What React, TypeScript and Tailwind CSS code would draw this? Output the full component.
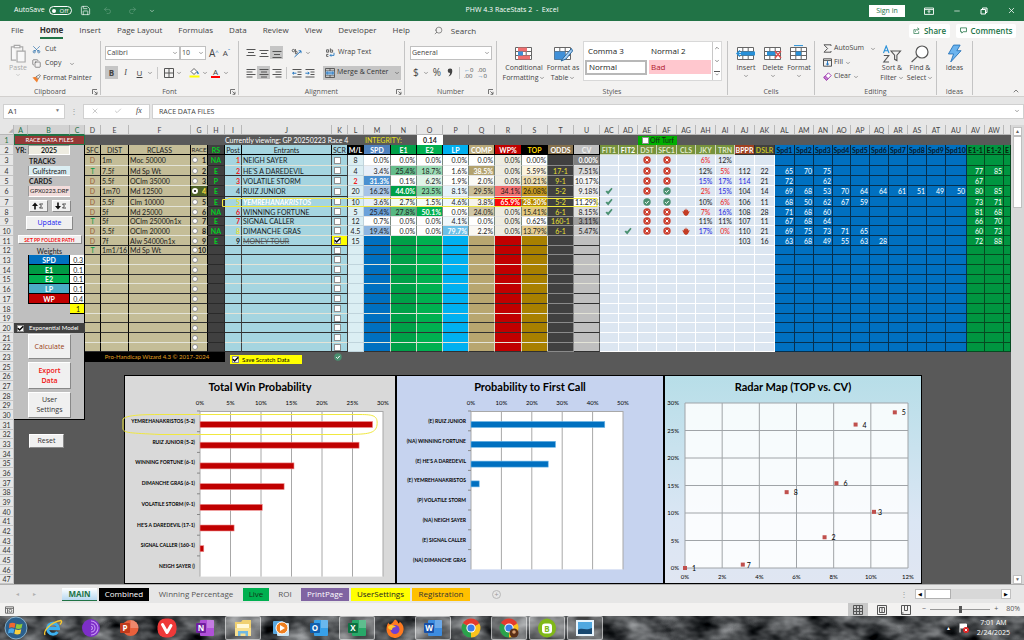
import { ReactNode } from "react";
import clsx from "clsx";
import {
  Check,
  ChevronDown,
  ChevronUp,
  Copy,
  Minus,
  Redo2,
  Save,
  Scissors,
  Search,
  Undo2,
  X,
} from "lucide-react";

type Cell = [text: string, className: string];

type Horse = {
  post: string;
  postClass: string;
  name: string;
  ml: string;
  stats: Cell[];
  odds: string;
  cv: Cell;
  fits: string[];
  jky: Cell;
  trn: Cell;
  bppr: Cell;
  dslr: string;
  spd: string[];
  e1: string[];
};

const COLUMNS: Cell[] = [
  ["A", "w-[14px]"], ["B", "w-[42px]"], ["C", "w-[15px]"], ["D", "w-[16px]"], ["E", "w-[28px]"],
  ["F", "w-[62px]"], ["G", "w-[17px]"], ["H", "w-[17px]"], ["I", "w-[17px]"], ["J", "w-[90px]"],
  ["K", "w-[16px]"], ["L", "w-[16px]"], ["M", "w-[27px]"], ["N", "w-[26px]"], ["O", "w-[26px]"],
  ["P", "w-[26px]"], ["Q", "w-[26px]"], ["R", "w-[27px]"], ["S", "w-[26px]"], ["T", "w-[26px]"],
  ["U", "w-[26px]"], ["AC", "w-[19px]"], ["AD", "w-[19px]"], ["AE", "w-[19px]"], ["AF", "w-[20px]"],
  ["AG", "w-[19px]"], ["AH", "w-[20px]"], ["AI", "w-[19px]"], ["AJ", "w-[20px]"], ["AK", "w-[20px]"],
  ["AL", "w-[20px]"], ["AM", "w-[19px]"], ["AN", "w-[19px]"], ["AO", "w-[18px]"], ["AP", "w-[19px]"],
  ["AQ", "w-[19px]"], ["AR", "w-[19px]"], ["AS", "w-[19px]"], ["AT", "w-[19px]"], ["AU", "w-[21px]"],
  ["AV", "w-[18px]"], ["AW", "w-[19px]"], ["", "w-[7px]"],
];

const HEADERS: Cell[] = [
  ["SFC", "bg-[#c4bd97] border-black text-[#222]"],
  ["DIST", "bg-[#c4bd97] border-black text-[#222]"],
  ["RCLASS", "bg-[#c4bd97] border-black text-[#222]"],
  ["RACE", "bg-[#c4bd97] border-black text-[#222] text-[6px]"],
  ["RS", "bg-[#404040] border-black text-[#00d020] font-bold"],
  ["Post", "bg-[#a5d5e0] border-black text-[#222]"],
  ["Entrants", "bg-[#a5d5e0] border-black text-[#222]"],
  ["SCR", "bg-[#a5d5e0] border-black text-[#222]"],
  ["M/L", "bg-black border-black text-white font-bold"],
  ["SPD", "bg-[#4f81bd] border-black text-white font-bold"],
  ["E1", "bg-[#00a048] border-black text-white font-bold"],
  ["E2", "bg-[#00b050] border-black text-white font-bold"],
  ["LP", "bg-[#00b0f0] border-black text-white font-bold"],
  ["COMP", "bg-[#b8a878] border-black text-white font-bold"],
  ["WP%", "bg-[#c00000] border-black text-white font-bold"],
  ["TOP", "bg-black border-black text-[#ffd700] font-bold"],
  ["ODDS", "bg-[#85714d] border-black text-white font-bold"],
  ["CV", "bg-[#bfbfbf] border-black text-[#f0f0f0] font-bold"],
  ["FIT1", "bg-[#76923c] border-[#d0d8c0] text-[#dfe8c8] font-bold"],
  ["FIT2", "bg-[#76923c] border-[#d0d8c0] text-white font-bold"],
  ["DST", "bg-[#76923c] border-[#d0d8c0] text-[#dfe8c8] font-bold"],
  ["SFC1", "bg-[#76923c] border-[#d0d8c0] text-[#dfe8c8] font-bold"],
  ["CLS", "bg-[#76923c] border-[#d0d8c0] text-[#dfe8c8] font-bold"],
  ["JKY", "bg-[#76923c] border-[#d0d8c0] text-[#dfe8c8] font-bold"],
  ["TRN", "bg-[#76923c] border-[#d0d8c0] text-[#dfe8c8] font-bold"],
  ["BPPR", "bg-[#a04020] border-[#303030] text-white font-bold"],
  ["DSLR", "bg-[#404040] border-[#303030] text-[#c8c020] font-bold"],
  ...["Spd1", "Spd2", "Spd3", "Spd4", "Spd5", "Spd6", "Spd7", "Spd8", "Spd9", "Spd10"].map(
    (t): Cell => [t, "bg-[#0070c0] border-[#06243c] text-[#06182c] font-bold"]
  ),
  ["E1-1", "bg-[#009540] border-[#063c18] text-[#06240c] font-bold"],
  ["E1-2", "bg-[#009540] border-[#063c18] text-[#06240c] font-bold"],
  ["E", "bg-[#009540] border-[#063c18] text-[#06240c] font-bold"],
];

const RACES = [
  ["D", "1m", "Moc 50000", "NA"],
  ["T", "7.5f", "Md Sp Wt", "E"],
  ["D", "5.5f", "OClm 35000", "P"],
  ["D", "1m70", "Md 12500", "E"],
  ["D", "5.5f", "Clm 10000", "E"],
  ["D", "5f", "Md 25000", "NA"],
  ["T", "5f", "OClm 25000n1x", "E"],
  ["D", "5.5f", "OClm 20000", "NA"],
  ["D", "7f", "Alw 54000n1x", "E"],
  ["T", "1m1/16", "Md Sp Wt", ""],
];

const RED = "text-[#f02020]";
const BLUE = "text-[#2828e0]";
const WHITE = "bg-white";

const HORSES: Horse[] = [
  {
    post: "1", postClass: "text-[#f04020]", name: "NEIGH SAYER", ml: "8",
    stats: [["0.0%", WHITE], ["0.0%", WHITE], ["0.0%", WHITE], ["0.0%", WHITE], ["0.0%", WHITE], ["0.0%", "bg-[#eeece1]"], ["0.00%", WHITE]],
    odds: "", cv: ["0.00%", "bg-[#808080] text-white font-bold"],
    fits: ["", "", "x", "x", ""], jky: ["6%", RED], trn: ["12%", ""], bppr: ["", ""], dslr: "", spd: [], e1: [],
  },
  {
    post: "2", postClass: "text-[#f02020]", name: "HE'S A DAREDEVIL", ml: "4",
    stats: [["3.4%", "bg-[#e8eff8]"], ["25.4%", "bg-[#66bd8c]"], ["18.7%", "bg-[#9cdcb6]"], ["1.6%", WHITE], ["38.5%", "bg-[#b3a26e] text-white font-bold"], ["0.0%", "bg-[#eeece1]"], ["5.59%", "bg-[#fbf3dd]"]],
    odds: "17-1", cv: ["7.51%", "bg-[#d6d6d6]"],
    fits: ["", "", "x", "x", ""], jky: ["12%", ""], trn: ["5%", RED], bppr: ["112", ""], dslr: "22", spd: ["65", "70", "75"], e1: ["77", "85"],
  },
  {
    post: "3", postClass: "text-[#f02020]", name: "VOLATILE STORM", ml: "2",
    stats: [["31.3%", "bg-[#4a90d0] text-white font-bold"], ["0.1%", WHITE], ["6.2%", "bg-[#e0f4e8]"], ["1.9%", WHITE], ["2.0%", "bg-[#fbfaf6]"], ["0.0%", "bg-[#eeece1]"], ["10.21%", "bg-[#ecdcae]"]],
    odds: "9-1", cv: ["10.17%", "bg-[#f4f4f4]"],
    fits: ["", "", "x", "x", ""], jky: ["15%", BLUE], trn: ["17%", BLUE], bppr: ["114", BLUE], dslr: "21", spd: ["72", "", "62"], e1: ["67", ""],
  },
  {
    post: "4", postClass: "text-[#404858]", name: "RUIZ JUNIOR", ml: "20",
    stats: [["16.2%", "bg-[#a6c4e6]"], ["44.0%", "bg-[#00a048] text-white font-bold"], ["23.5%", "bg-[#84d4a4]"], ["8.1%", "bg-[#e6f4fb]"], ["29.5%", "bg-[#c9bd96]"], ["34.1%", "bg-[#f27070]"], ["26.08%", "bg-[#c49820]"]],
    odds: "5-2", cv: ["9.18%", "bg-[#eaeaea]"],
    fits: ["v", "", "x", "o", ""], jky: ["2%", RED], trn: ["15%", BLUE], bppr: ["104", ""], dslr: "14",
    spd: ["69", "68", "53", "70", "64", "64", "61", "51", "49", "50"], e1: ["80", "85"],
  },
  {
    post: "5", postClass: "text-[#e8e040]", name: "YEMREHANAKRISTOS", ml: "10",
    stats: [["3.6%", "bg-[#e8eff8]"], ["2.7%", "bg-[#f4fbf7]"], ["1.5%", "bg-[#f6fcf8]"], ["4.6%", "bg-[#f0f8fc]"], ["3.8%", "bg-[#f6f3ec]"], ["65.9%", "bg-[#fc0808] text-white font-bold"], ["28.30%", "bg-[#b88a00] text-white font-bold"]],
    odds: "5-2", cv: ["11.29%", WHITE],
    fits: ["v", "", "o", "o", ""], jky: ["10%", ""], trn: ["6%", RED], bppr: ["106", ""], dslr: "11", spd: ["68", "50", "62", "67", "59"], e1: ["73", "71"],
  },
  {
    post: "6", postClass: "text-[#f02020]", name: "WINNING FORTUNE", ml: "5",
    stats: [["25.4%", "bg-[#6ca2da]"], ["27.8%", "bg-[#58b882]"], ["50.1%", "bg-[#00b050] text-white font-bold"], ["0.0%", WHITE], ["24.0%", "bg-[#d0c6a6]"], ["0.0%", "bg-[#eeece1]"], ["15.41%", "bg-[#e2c880]"]],
    odds: "6-1", cv: ["8.15%", "bg-[#dedede]"],
    fits: ["v", "", "x", "x", "f"], jky: ["7%", RED], trn: ["16%", BLUE], bppr: ["108", ""], dslr: "28", spd: ["71", "68", "60"], e1: ["81", "68"],
  },
  {
    post: "7", postClass: "text-[#f02020]", name: "SIGNAL CALLER", ml: "12",
    stats: [["0.7%", WHITE], ["0.0%", WHITE], ["0.0%", WHITE], ["4.1%", "bg-[#f0f8fc]"], ["0.0%", WHITE], ["0.0%", "bg-[#eeece1]"], ["0.62%", WHITE]],
    odds: "160-1", cv: ["3.11%", "bg-[#a0a0a0]"],
    fits: ["", "", "x", "x", ""], jky: ["11%", ""], trn: ["11%", ""], bppr: ["107", ""], dslr: "11", spd: ["67", "68", "64"], e1: ["66", "70"],
  },
  {
    post: "8", postClass: "text-[#e8e040]", name: "DIMANCHE GRAS", ml: "4.5",
    stats: [["19.4%", "bg-[#8fb6e0]"], ["0.0%", WHITE], ["0.0%", WHITE], ["79.7%", "bg-[#6cc0e8] text-white font-bold"], ["2.2%", "bg-[#faf8f4]"], ["0.0%", "bg-[#eeece1]"], ["13.79%", "bg-[#e4cc90]"]],
    odds: "6-1", cv: ["5.47%", "bg-[#c8c8c8]"],
    fits: ["", "v", "x", "x", "f"], jky: ["17%", BLUE], trn: ["0%", RED], bppr: ["110", ""], dslr: "21", spd: ["69", "75", "73", "71", "65"], e1: ["60", "73"],
  },
];

const EMPTY_STATS = [
  "bg-[#0070c0]", "bg-[#00a048]", "bg-[#00b050]", "bg-[#00b0f0]", "bg-[#b8a670]",
  "bg-[#c00000]", "bg-[#a88000]",
];

const WEIGHTS: [string, string, string][] = [
  ["SPD", "0.3", "bg-[#0070c0] text-white"],
  ["E1", "0.1", "bg-[#009a44] text-white"],
  ["E2", "0.1", "bg-[#00b050] text-white"],
  ["LP", "0.1", "bg-[#4bacc6] text-white"],
  ["WP", "0.4", "bg-[#c00000] text-white"],
];

const SHORT_ROWS = [9, 12, 15, 19, 22, 26, 29, 32, 35, 38, 41, 44, 47];
const LIGHT_LINES = [3, 5, 7, 9, 10, 13, 15, 18, 21];
const LOWER_ROWS = Array.from({ length: 23 }, (_, i) => i + 25);

const rowHeight = (row: number) =>
  SHORT_ROWS.includes(row) ? "h-[9px]" : row === 3 || row === 6 ? "h-[11px]" : "h-[10px]";

const TinyCheck: React.FC<{ label: string; checked?: boolean }> = ({ label, checked }) => (
  <span className="relative block size-[7px] shrink-0">
    <input
      type="checkbox"
      aria-label={label}
      defaultChecked={checked}
      className="peer block size-[7px] appearance-none border border-[#909090] bg-white"
    />
    <Check className="pointer-events-none absolute inset-0 hidden size-[7px] text-black peer-checked:block" strokeWidth={5} />
  </span>
);

const Status: React.FC<{ kind: string }> = ({ kind }) => {
  if (!kind) return null;
  if (kind === "v")
    return (
      <svg viewBox="0 0 8 8" className="mx-auto block size-[8px]">
        <path d="M0.5 4.6 2 3.4 3 4.6 6.4 0.8 7.6 1.8 3.2 7.4Z" fill="#4a9070" />
      </svg>
    );
  if (kind === "f")
    return (
      <svg viewBox="0 0 8 8" className="mx-auto block size-[8px]">
        <path d="M4 0.2 4.9 2.6 6 1.4 6.2 3.6 7.8 3.2 5.8 7 4 7.9 2.2 7 0.2 3.2 1.8 3.6 2 1.4 3.1 2.6Z" fill="#c43c24" />
      </svg>
    );
  return (
    <svg viewBox="0 0 8 8" className="mx-auto block size-[8px]">
      <circle cx="4" cy="4" r="3.7" fill={kind === "x" ? "#cc4030" : "#4a9070"} />
      <path d={kind === "x" ? "M2.6 2.6 5.4 5.4M5.4 2.6 2.6 5.4" : "M2.2 4.2 3.5 5.5 5.8 2.9"} stroke="#fff" strokeWidth="1" fill="none" />
    </svg>
  );
};

/* ---------- title bar and ribbon ---------- */

const Drop = () => <ChevronDown className="size-[6px] shrink-0" />;

const TitleBar = () => (
  <header className="grid h-[21px] grid-cols-3 items-center bg-[#217346] text-[7px] text-white">
    <div className="flex items-center gap-1 pl-[14px]">
      <span className="text-[7px]">AutoSave</span>
      <button className="flex h-[9px] w-[23px] items-center gap-1 rounded-full border border-white px-[2px] text-[6px] leading-none">
        <span className="size-[4px] rounded-full bg-white" />
        Off
      </button>
      <Save className="ml-1 size-[11px]" strokeWidth={1.5} />
      <Undo2 className="ml-2 size-[9px] text-[#5c9a78]" />
      <Redo2 className="ml-3 size-[9px] text-[#5c9a78]" />
      <span className="ml-2"><Drop /></span>
    </div>
    <h1 className="text-center">PHW 4.3 RaceStats 2 &nbsp;-&nbsp; Excel</h1>
    <div className="flex items-center justify-end gap-[19px] pr-2">
      <button className="h-[12px] w-[36px] bg-white text-[7px] leading-none text-[#217346]">Sign in</button>
      <svg viewBox="0 0 10 8" className="h-[8px] w-[10px]" fill="none" stroke="#fff" strokeWidth="0.9">
        <path d="M0.5 1h9v6.4h-9zM0.5 2.6h9M5 6.4V3.6M3.8 4.8 5 3.6 6.2 4.8" />
      </svg>
      <Minus className="size-[8px]" />
      <svg viewBox="0 0 8 8" className="size-[8px]" fill="none" stroke="#fff">
        <path d="M1 2.5h4.5V7H1zM2.5 2.5V1H7v4.5H5.5" />
      </svg>
      <X className="size-[9px]" />
    </div>
  </header>
);

const MENUS = ["File", "Home", "Insert", "Page Layout", "Formulas", "Data", "Review", "View", "Developer", "Help"];

const MenuBar = () => (
  <nav className="flex h-[19px] items-center bg-[#f3f2f1] pl-[11px] text-[8px] text-[#444]">
    <div className="flex gap-[16px]">
      {MENUS.map((menu) => (
        <a
          key={menu}
          href="#"
          className={clsx("border-b-2 leading-[14px]", menu === "Home" ? "border-[#217346] font-bold text-[#333]" : "border-transparent")}
        >
          {menu}
        </a>
      ))}
    </div>
    <Search className="ml-6 size-[9px] -scale-x-100" strokeWidth={1.5} />
    <span className="ml-2">Search</span>
    <div className="ml-auto flex gap-[6px] pr-[8px] font-semibold text-[#217346]">
      <button className="flex h-[14px] w-[41px] items-center justify-center gap-1 rounded-xs bg-white">
        <svg viewBox="0 0 8 8" className="size-[7px]" fill="none" stroke="#217346" strokeWidth="0.8">
          <path d="M3 3H1v4.5h5.5V5M2.8 5.5C3 3.4 4 2.4 6 2.4M5 0.8l2 1.6-2 1.6" />
        </svg>
        Share
      </button>
      <button className="flex h-[14px] w-[60px] items-center justify-center gap-1 rounded-xs bg-white">
        <svg viewBox="0 0 8 8" className="size-[7px]" fill="none" stroke="#217346" strokeWidth="0.9">
          <path d="M0.6 1h6.8v4.4H3.6L2 7V5.4H0.6z" />
        </svg>
        Comments
      </button>
    </div>
  </nav>
);

const Group: React.FC<{ label: string; className: string; launcher?: boolean; children: ReactNode }> = ({
  label,
  className,
  launcher,
  children,
}) => (
  <section className={clsx("relative flex h-[54px] shrink-0 flex-col border-r border-[#c4c4c4]", className)}>
    <div className="flex min-h-0 flex-1 items-start">{children}</div>
    <footer className="text-center text-[7px] leading-[7px] text-[#555]">{label}</footer>
    {launcher && (
      <svg viewBox="0 0 6 6" className="absolute right-[2px] bottom-0 size-[6px]" fill="none" stroke="#666" strokeWidth="0.9">
        <path d="M0.5 5V0.5H5M2.4 2.4 5 5M5 2.8V5.3H2.6" />
      </svg>
    )}
  </section>
);

const Lines: React.FC<{ d: string }> = ({ d }) => (
  <svg viewBox="0 0 10 10" className="size-[10px]" stroke="#555" strokeWidth="1" fill="none">
    <path d={d} />
  </svg>
);

const Tool: React.FC<{ label: string; active?: boolean; children: ReactNode }> = ({ label, active, children }) => (
  <button aria-label={label} className={clsx("flex size-[13px] items-center justify-center text-[#444]", active && "bg-[#c5c5c5]")}>
    {children}
  </button>
);

const BigButton: React.FC<{ icon: ReactNode; lines: string[]; className: string; drop?: boolean }> = ({ icon, lines, className, drop }) => (
  <button className={clsx("flex flex-col items-center pt-[3px] text-[7px] leading-[10px] text-[#444]", className)}>
    <span className="flex h-[19px] items-center">{icon}</span>
    {lines.map((line, i) => (
      <span key={line} className="flex items-center gap-px whitespace-nowrap">
        {line}
        {drop && i === lines.length - 1 && i > 0 && <Drop />}
      </span>
    ))}
    {drop && lines.length === 1 && <Drop />}
  </button>
);

const TableIcon: React.FC<{ children: ReactNode }> = ({ children }) => (
  <svg viewBox="0 0 20 18" className="h-[18px] w-[20px]" fill="none">
    <path d="M1.5 2.5h16v12h-16zM1.5 6.5h16M1.5 10.5h16M6.8 2.5v12M12.2 2.5v12" fill="#fff" stroke="#666" />
    {children}
  </svg>
);

const Ribbon = () => (
  <div className="flex h-[57px] items-start border-b border-[#d2d0ce] bg-[#f3f2f1] pt-[1px] text-[7px] text-[#444]">
    <Group label="Clipboard" className="w-[101px]" launcher>
      <button className="flex w-[32px] flex-col items-center pt-[3px] pl-[4px] text-[#a8a8a8]">
        <svg viewBox="0 0 18 20" className="h-[19px] w-[18px]" fill="#f8f8f8" stroke="#a8a8a8" strokeWidth="1.2">
          <path d="M5 3H2v14h5M11 3h3v4M5 1.5h6V4H5zM8 7.5h8.5V19H8z" />
        </svg>
        <span className="leading-[9px]">Paste</span>
        <Drop />
      </button>
      <div className="flex flex-col pt-[1px]">
        <button className="flex h-[14px] items-center gap-1"><Scissors className="size-[9px] -rotate-90 text-[#3878b0]" /> Cut</button>
        <button className="flex h-[15px] items-center gap-1"><Copy className="size-[9px]" strokeWidth={1.5} /> Copy <span className="ml-1"><Drop /></span></button>
        <button className="flex h-[14px] items-center gap-[2px] whitespace-nowrap">
          <svg viewBox="0 0 10 10" className="size-[9px]">
            <path d="M0.5 4 4 3l3 3-1.5 3.5z" fill="#f08030" />
            <path d="M4.5 3 8.5 0.8 9.3 1.6 7 5.4z" fill="#fff" stroke="#555" strokeWidth="0.8" />
          </svg>
          Format Painter
        </button>
      </div>
    </Group>

    <Group label="Font" className="w-[138px]" launcher>
      <div className="flex flex-col gap-[6px] pt-[5px] pl-[4px]">
        <div className="flex items-center">
          <button className="flex h-[14px] w-[75px] items-center justify-between border border-[#c0c0c0] bg-white pr-px pl-px">Calibri <Drop /></button>
          <button className="flex h-[14px] w-[26px] items-center justify-between border border-[#c0c0c0] bg-white px-px">10 <Drop /></button>
          <button className="ml-[3px] text-[10px] leading-none">A<sup className="text-[6px] text-[#2878c0]">^</sup></button>
          <button className="ml-[4px] text-[8px] leading-none">A<sup className="text-[6px] text-[#2878c0]">ˇ</sup></button>
        </div>
        <div className="flex items-center gap-px text-[8px]">
          <Tool label="Bold" active><b>B</b></Tool>
          <Tool label="Italic"><i className="font-['Liberation_Serif',serif]">I</i></Tool>
          <Tool label="Underline"><u>U</u></Tool>
          <Drop />
          <span className="mx-[3px] h-[12px] border-l border-[#c8c8c8]" />
          <Tool label="Borders"><Lines d="M0.5 0.5h9v9h-9zM5 0.5v9M0.5 5h9" /></Tool>
          <Drop />
          <span className="ml-1" />
          <Tool label="Fill colour">
            <svg viewBox="0 0 11 11" className="size-[11px]">
              <path d="M2 4.5 5 1.5 8 4.5 5 7.5z" fill="#fff" stroke="#555" strokeWidth="0.9" />
              <path d="M8 4.5 9.4 6.8" stroke="#2878c0" strokeWidth="1.4" />
              <path d="M0.5 8.5h10v2h-10z" fill="#ffff00" />
            </svg>
          </Tool>
          <Drop />
          <Tool label="Font colour"><span className="border-b-2 border-[#ff0000] px-[2px] leading-[9px]">A</span></Tool>
          <Drop />
        </div>
      </div>
    </Group>

    <Group label="Alignment" className="w-[166px]" launcher>
      <div className="flex flex-col gap-[7px] pt-[5px] pl-[5px]">
        <div className="flex h-[13px] items-center">
          <Tool label="Top align"><Lines d="M0.5 1.5h9M2 4.5h6M0.5 7.5h9" /></Tool>
          <Tool label="Middle align"><Lines d="M0.5 2.5h9M2 5.5h6M0.5 8.5h9" /></Tool>
          <Tool label="Bottom align" active><Lines d="M0.5 3.5h9M2 6.5h6M0.5 9.5h9" /></Tool>
          <button aria-label="Orientation" className="ml-[8px] flex items-center gap-[3px]">
            <svg viewBox="0 0 11 10" className="h-[10px] w-[11px]" fill="none">
              <path d="M1.2 2.6a1.2 1.2 0 1 0 2.4 0 1.2 1.2 0 1 0-2.4 0M4.4 1v4.8a1.3 1.3 0 1 0 0-2.4" stroke="#555" strokeWidth="0.9" />
              <path d="M3.5 9 10 3M7.6 2.8H10v2.4" stroke="#2878c0" />
            </svg>
            <Drop />
          </button>
          <button className="ml-[15px] flex items-center gap-[3px] whitespace-nowrap">
            <svg viewBox="0 0 9 9" className="size-[9px]" fill="none">
              <path d="M0.6 1.8h2v2.4h-2zM4.4 0.4v3.8h2.2V2H4.4M2.4 6.4H0.6v2h1.8" stroke="#555" strokeWidth="0.9" />
              <path d="M4 7.4h4V4.8M5.2 6.2 4 7.4l1.2 1.2" stroke="#2878c0" strokeWidth="0.9" />
            </svg>
            Wrap Text
          </button>
        </div>
        <div className="flex h-[13px] items-center">
          <Tool label="Align left"><Lines d="M0.5 1.5h9M0.5 4h6M0.5 6.5h9M0.5 9h6" /></Tool>
          <Tool label="Center" active><Lines d="M0.5 1.5h9M2 4h6M0.5 6.5h9M2 9h6" /></Tool>
          <Tool label="Align right"><Lines d="M0.5 1.5h9M3.5 4h6M0.5 6.5h9M3.5 9h6" /></Tool>
          <span className="mx-[3px] h-[12px] border-l border-[#c8c8c8]" />
          <Tool label="Decrease indent">
            <svg viewBox="0 0 10 10" className="size-[10px]" fill="none">
              <path d="M0.5 1.5h9M5.5 4h4M5.5 6.5h4M0.5 9h9" stroke="#555" />
              <path d="M4.4 5.2H0.6M2 4 0.6 5.2 2 6.4" stroke="#2878c0" />
            </svg>
          </Tool>
          <Tool label="Increase indent">
            <svg viewBox="0 0 10 10" className="size-[10px]" fill="none">
              <path d="M0.5 1.5h9M5.5 4h4M5.5 6.5h4M0.5 9h9" stroke="#555" />
              <path d="M0.4 5.2h3.8M2.8 4l1.4 1.2-1.4 1.2" stroke="#2878c0" />
            </svg>
          </Tool>
          <button className="ml-[7px] flex h-[14px] w-[78px] items-center gap-[2px] bg-[#c5c5c5] pl-[2px] whitespace-nowrap text-[#333]">
            <svg viewBox="0 0 10 10" className="size-[10px]" fill="none">
              <path d="M0.5 0.5h9v9h-9zM0.5 3h9M0.5 7h9M5 0.5V3M5 7v2.5" stroke="#444" strokeWidth="0.8" />
              <path d="M0.8 3.3h8.4v3.4H0.8z" fill="#9cc8f0" />
              <path d="M1.5 5h7M2.8 3.8 1.5 5l1.3 1.2M7.2 3.8 8.5 5 7.2 6.2" stroke="#1868b0" strokeWidth="0.8" />
            </svg>
            Merge &amp; Center
            <span className="ml-[4px]"><Drop /></span>
          </button>
        </div>
      </div>
    </Group>

    <Group label="Number" className="w-[92px]" launcher>
      <div className="flex flex-col gap-[6px] pt-[5px] pl-[5px]">
        <button className="flex h-[14px] w-[82px] items-center justify-between border border-[#c0c0c0] bg-white px-px">General <Drop /></button>
        <div className="flex h-[13px] items-center gap-[4px] text-[10px]">
          <span className="pl-[3px]">$</span>
          <Drop />
          <span>%</span>
          <svg viewBox="0 0 6 9" className="mx-[2px] h-[9px] w-[6px]">
            <path d="M3 0.5a2.2 2.2 0 0 1 2.3 2.4C5.3 5.5 4 7.5 1.5 8.5 2.5 7.3 3 6.4 3 5.1A2.3 2.3 0 1 1 3 0.5z" fill="#444" />
          </svg>
          <span className="h-[12px] border-l border-[#c8c8c8]" />
          <span className="text-[6px] leading-[6px]"><span className="text-[#2878c0]">←</span>0<br />.00</span>
          <span className="text-[6px] leading-[6px]">.00<br /><span className="text-[#2878c0]">→</span>0</span>
        </div>
      </div>
    </Group>

    <Group label="Styles" className="w-[231px]">
      <BigButton
        className="w-[50px] pl-[4px]"
        drop
        lines={["Conditional", "Formatting"]}
        icon={<TableIcon><path d="M4 2.5h9v4H4zM4 10.5h12v4H4z" fill="#f07070" /><path d="M4 6.5h5v4H4z" fill="#4090d8" /></TableIcon>}
      />
      <BigButton
        className="w-[32px]"
        drop
        lines={["Format as", "Table"]}
        icon={<TableIcon><path d="M1.5 6.5h10.7v8H1.5z" fill="#4090d8" /><path d="M18.5 3.5 11 12l-3 4 5-2 6.5-8z" fill="#a8d0f4" stroke="#2868a0" /></TableIcon>}
      />
      <div className="mr-[5px] ml-auto flex h-[40px] w-[139px] border border-[#d8d8d8] bg-white text-[8px] text-[#222]">
        <div className="grid flex-1 grid-cols-2 gap-x-[2px] p-[1px]">
          <button className="pl-[3px] text-left">Comma 3</button>
          <button className="pl-[2px] text-left">Normal 2</button>
          <button className="h-[15px] border-2 border-[#b8b8b8] pl-[2px] text-left leading-none">Normal</button>
          <button className="h-[14px] bg-[#ffc7ce] pl-[2px] text-left leading-none text-[#b02030]">Bad</button>
        </div>
        <div className="flex w-[9px] flex-col items-center justify-around border-l border-[#c8c8c8]">
          <ChevronUp className="size-[6px]" />
          <ChevronDown className="size-[6px]" />
          <ChevronDown className="size-[6px] border-t border-[#555]" />
        </div>
      </div>
    </Group>

    <Group label="Cells" className="w-[87px]">
      <BigButton className="w-[32px] pl-[4px]" drop lines={["Insert"]} icon={<TableIcon><path d="M5 6.5h14v4H5z" fill="#2890d8" /><path d="M8 8.5H1M4 5.5 1 8.5l3 3" stroke="#2890d8" strokeWidth="1.4" /></TableIcon>} />
      <BigButton className="w-[26px]" drop lines={["Delete"]} icon={<TableIcon><path d="M4 6.5h8v4H4z" fill="#2890d8" /><path d="m12 6 6 7M18 6l-6 7" stroke="#e05050" strokeWidth="1.4" /></TableIcon>} />
      <BigButton className="w-[26px]" drop lines={["Format"]} icon={<TableIcon><path d="M6.8 6.5h5.4v4H6.8z" fill="#2890d8" /><path d="M5 0.6h9" stroke="#2890d8" /></TableIcon>} />
    </Group>

    <Group label="Editing" className="w-[122px]">
      <div className="flex w-[62px] flex-col pl-[8px]">
        <button className="flex h-[15px] items-center gap-[2px]">
          <svg viewBox="0 0 9 9" className="size-[9px]" fill="none" stroke="#555"><path d="M8 2V0.8H1L4.6 4.5 1 8.2h7V7" /></svg>
          AutoSum <span className="ml-[4px]"><Drop /></span>
        </button>
        <button className="flex h-[13px] items-center gap-[2px]">
          <svg viewBox="0 0 9 9" className="size-[9px]" fill="none">
            <path d="M0.5 0.8h8v7.4h-8zM0.5 2.4h8" stroke="#555" />
            <path d="M4.5 3v4M3 5.6 4.5 7 6 5.6" stroke="#2878c0" />
          </svg>
          Fill <Drop />
        </button>
        <button className="flex h-[15px] items-center gap-[2px]">
          <svg viewBox="0 0 9 9" className="size-[9px]" fill="none" stroke="#a040b0">
            <path d="M0.8 5.5 5.4 0.8 8.2 3.6 3.6 8.2z" fill="#fff" />
            <path d="M2.4 4 5.2 6.8 3.6 8.2 0.8 5.5z" fill="#c880d4" />
          </svg>
          Clear <Drop />
        </button>
      </div>
      <BigButton
        className="w-[30px]"
        drop
        lines={["Sort &", "Filter"]}
        icon={
          <svg viewBox="0 0 20 18" className="h-[18px] w-[20px]" fill="none">
            <path d="M1.5 8 4.2 1 7 8M2.5 5.8h3.5" stroke="#2890d8" strokeWidth="1.1" />
            <path d="M1.8 10.5h5L1.8 17h5.2M9 6h9.5l-3.6 4.2v5.3l-2.3-1.2v-4.1z" stroke="#555" strokeWidth="1.1" />
          </svg>
        }
      />
      <BigButton
        className="w-[26px]"
        drop
        lines={["Find &", "Select"]}
        icon={
          <svg viewBox="0 0 20 18" className="h-[18px] w-[20px]" fill="none" stroke="#555" strokeWidth="1.2">
            <circle cx="12" cy="7" r="6" fill="#fff" />
            <path d="M7.6 11.4 1.6 17" />
          </svg>
        }
      />
    </Group>

    <Group label="Ideas" className="w-[36px]">
      <BigButton
        className="w-[36px]"
        lines={["Ideas"]}
        icon={
          <svg viewBox="0 0 16 20" className="h-[19px] w-[15px]">
            <path d="M7 1h7l-3.5 6H15L4 19l3-8.5H1.5z" fill="#6cb4ee" stroke="#2070b8" strokeWidth="0.9" />
          </svg>
        }
      />
    </Group>
    <button aria-label="Collapse the ribbon" className="mt-auto mr-[4px] mb-[1px] ml-auto"><ChevronUp className="size-[8px]" /></button>
  </div>
);

const FormulaBar = () => (
  <div className="flex h-[28px] items-center bg-[#e6e6e6] px-[3px] text-[8px] text-[#444]">
    <button className="flex h-[15px] w-[62px] items-center justify-between border border-[#d0d0d0] bg-white px-[4px]">
      A1 <span className="text-[5px] text-[#777]">▼</span>
    </button>
    <span className="w-[18px] text-center text-[#999]">⋮</span>
    <div className="flex h-[15px] w-[67px] items-center justify-around border border-[#d0d0d0] bg-white text-[#b0b0b0]">
      <X className="size-[8px]" />
      <Check className="size-[8px]" />
      <i className="font-['Liberation_Serif',serif] text-[#444]">fx</i>
    </div>
    <input
      aria-label="Formula"
      defaultValue="RACE DATA FILES"
      className="ml-[2px] h-[15px] min-w-0 flex-1 border border-[#d0d0d0] bg-white px-[6px] text-[7px]"
    />
    <span className="-ml-[10px] w-[7px]"><Drop /></span>
  </div>
);

/* ---------- sheet ---------- */

const cell = "border-r border-b p-0 px-px overflow-hidden whitespace-nowrap";

const RowHeader: React.FC<{ row: number }> = ({ row }) => (
  <th className={clsx("border-r border-b border-[#c4c4c4] p-0 text-center font-normal", row === 1 ? "bg-[#d2d2d2] text-[#217346]" : "bg-[#e6e6e6] text-[#333]")}>
    {row}
  </th>
);

const PanelCells: React.FC<{ row: number }> = ({ row }) => {
  const gray = "bg-[#bfbfbf] p-0";
  if (row === 2)
    return (
      <>
        <td className={clsx(gray, "text-center font-bold")}>YR:</td>
        <td className="border border-[#999] border-r-white border-b-white bg-[#eeece1] p-0 text-center font-bold">2025</td>
        <td className={clsx(gray, "border-r border-black")} />
      </>
    );
  if (row === 4 || row === 6)
    return (
      <>
        <td className={gray} />
        <td className={clsx("border-l border-b border-[#999] border-b-white p-0 text-center whitespace-nowrap", row === 4 ? "bg-[#dbeef3]" : "bg-[#f2dcdb] text-[6px]")}>
          {row === 4 ? "Gulfstream" : "GPX0223.DRF"}
        </td>
        <td className={clsx(gray, "border-r border-black")} />
      </>
    );
  if (row >= 13 && row <= 17) {
    const [name, value, tone] = WEIGHTS[row - 13];
    return (
      <>
        <td className={gray} />
        <td className={clsx("border border-t-0 border-black p-0 text-center font-bold", tone)}>{name}</td>
        <td className="border-r border-b border-black bg-white p-0 pr-px text-right">{value}</td>
      </>
    );
  }
  if (row === 18)
    return (
      <>
        <td className={gray} />
        <td className={gray} />
        <td className="border-r border-b border-black bg-[#ffff00] p-0 pr-[4px] text-right">1</td>
      </>
    );
  if (row === 20)
    return (
      <td colSpan={3} className="bg-[#404040] p-0 text-white">
        <label className="flex items-center gap-[5px] pl-[3px] text-[6px] whitespace-nowrap">
          <TinyCheck label="Exponential Model" checked /> Exponential Model
        </label>
      </td>
    );
  const text = row === 3 ? "TRACKS" : row === 5 ? "CARDS" : row === 12 ? "Weights" : "";
  return (
    <>
      <td className={gray} />
      <td className={clsx(gray, "pl-[1px]", row === 12 ? "text-center" : "font-bold")}>{text}</td>
      <td className={clsx(gray, "border-r border-black")} />
    </>
  );
};

const GridRow: React.FC<{ row: number }> = ({ row }) => {
  const race = RACES[row - 3];
  const horse = HORSES[row - 3];
  const scratched = row === 11;
  const selected = row === 6;
  const line = LIGHT_LINES.includes(row) ? "border-b-[#e4e4d8]" : "border-b-[#303030]";
  const khaki = clsx(cell, "border-r-black", line);
  const aqua = clsx(cell, "border-r-[#404040]", line);
  const pale = clsx(cell, "border-white bg-[#dce6f1] text-center");
  const blue = clsx(cell, "border-[#06304e] bg-[#0070c0] text-right text-white");
  const green = clsx(cell, "border-[#064a20] bg-[#009540] text-right text-white");

  return (
    <tr className={rowHeight(row)}>
      <RowHeader row={row} />
      <PanelCells row={row} />
      <td className={clsx(khaki, "bg-[#c4bd97] text-center", race?.[0] === "T" ? "text-[#009a44]" : "text-[#98603c]")}>{race?.[0]}</td>
      <td className={clsx(khaki, "bg-[#c4bd97]")}>{race?.[1]}</td>
      <td className={clsx(khaki, "bg-[#c4bd97]")}>{race?.[2]}</td>
      <td className={clsx(khaki, selected ? "bg-[#4f6228] text-[#ffe040]" : "bg-[#c4bd97]")}>
        <label className="flex items-center justify-between font-bold">
          <input
            type="radio"
            name="race"
            aria-label={`Race ${row - 2}`}
            defaultChecked={selected}
            className="block size-[6px] shrink-0 appearance-none rounded-full border border-[#909090] bg-white checked:border-2 checked:border-white checked:bg-black"
          />
          {race && row - 2}
        </label>
      </td>
      <td className={clsx(cell, "border-[#2a2a2a] bg-[#404040] text-center font-bold text-[#00d020]")}>{race?.[3]}</td>
      <td className={clsx(aqua, "bg-[#a5d5e0] text-right font-bold", horse?.postClass)}>{horse?.post}{scratched && "9"}</td>
      <td className={clsx(aqua, "bg-[#a5d5e0]", row === 7 && "font-bold text-white italic", scratched && "text-[#555] line-through")}>
        {horse?.name}
        {scratched && "MONEY TOUR"}
      </td>
      <td className={clsx(aqua, scratched ? "bg-[#ffff00]" : "bg-[#a5d5e0]")}>
        <span className="ml-[1px] block"><TinyCheck label={`Scratch ${row - 2}`} checked={scratched} /></span>
      </td>
      <td className={clsx(cell, "border-[#c0d4dc] bg-[#dbeef3] text-center", row === 5 && "font-bold text-[#f02020]")}>
        {horse?.ml}
        {scratched && "15"}
      </td>
      {horse
        ? horse.stats.map(([text, tone], i) => (
            <td key={i} className={clsx(cell, "border-r-[#7a8a80] border-b-[#e4e4e4] text-right", tone)}>{text}</td>
          ))
        : EMPTY_STATS.map((tone) => <td key={tone} className={clsx(cell, "border-r-[#d8d8c8]", line, tone)} />)}
      <td className={clsx(cell, "border-[#8a8a8a] bg-[#404040] text-center text-[#e8e030]")}>{horse?.odds}</td>
      <td className={clsx(cell, "border-r-[#555] text-right", horse ? "border-b-[#e4e4e4]" : line, horse ? horse.cv[1] : "bg-[#bfbfbf]")}>
        {horse?.cv[0]}
      </td>
      {[0, 1, 2, 3, 4].map((i) => (
        <td key={i} className={pale}>{horse && <Status kind={horse.fits[i]} />}</td>
      ))}
      <td className={clsx(pale, horse?.jky[1])}>{horse?.jky[0]}</td>
      <td className={clsx(pale, horse?.trn[1])}>{horse?.trn[0]}</td>
      <td className={clsx(pale, horse?.bppr[1])}>{scratched ? "103" : horse?.bppr[0]}</td>
      <td className={pale}>{scratched ? "16" : horse?.dslr}</td>
      {Array.from({ length: 10 }, (_, i) => (
        <td key={i} className={blue}>{scratched ? ["63", "68", "49", "55", "63", "28"][i] : horse?.spd[i]}</td>
      ))}
      {[0, 1, 2].map((i) => (
        <td key={i} className={green}>{scratched ? ["72", "88"][i] : horse?.e1[i]}</td>
      ))}
    </tr>
  );
};

const Grid = () => (
  <table className="w-[1011px] table-fixed border-separate border-spacing-0 font-['Lato','Liberation_Sans',sans-serif] text-[7px] leading-[8px] text-[#1c1c1c]">
    <colgroup>
      <col className="w-[14px]" />
      {COLUMNS.map(([name, width]) => <col key={name} className={width} />)}
    </colgroup>
    <thead>
      <tr className="h-[10px] text-[#444]">
        <th className="border-r border-b border-[#b8b8b8] bg-[#e6e6e6] p-0 text-right text-[5px] text-[#b0b0b0]">◢</th>
        {COLUMNS.map(([name], i) => (
          <th key={name} className={clsx("border-r border-b border-[#b8b8b8] p-0 font-normal", i < 3 ? "border-b-[#217346] bg-[#d2d2d2] text-[#217346]" : "bg-[#e6e6e6]")}>
            {name}
          </th>
        ))}
      </tr>
    </thead>
    <tbody>
      <tr className="h-[10px]">
        <RowHeader row={1} />
        <td colSpan={3} className="border border-[#217346] bg-[#953735] p-0 text-center text-[6px] whitespace-nowrap text-white">RACE DATA FILES</td>
        <td colSpan={5} className="bg-[#595959] p-0" />
        <td colSpan={4} className="bg-[#595959] p-0 whitespace-nowrap text-white">Currently viewing: GP 20250223 Race 4</td>
        <td colSpan={2} className="bg-[#595959] p-0 pl-px text-[#e8e020]">INTEGRITY:</td>
        <td className="bg-white p-0 text-center font-bold">0.14</td>
        <td colSpan={8} className="bg-[#595959] p-0" />
        <td colSpan={2} className="bg-[#595959] p-0">
          <label className="flex h-[9px] items-center gap-px bg-[#00b000] pl-[4px]">
            <TinyCheck label="Off Turf" /> Off Turf
          </label>
        </td>
        <td colSpan={18} className="bg-[#595959] p-0" />
      </tr>
      <tr className="h-[10px]">
        <RowHeader row={2} />
        <PanelCells row={2} />
        {HEADERS.map(([text, tone]) => (
          <td key={text} className={clsx("border-r border-b p-0 text-center whitespace-nowrap", tone)}>{text}</td>
        ))}
      </tr>
      {Array.from({ length: 20 }, (_, i) => <GridRow key={i} row={i + 3} />)}
      <tr className="h-[10px]">
        <RowHeader row={23} />
        <PanelCells row={23} />
        <td colSpan={5} className="bg-black p-0 pl-[4px] text-center text-[6px] text-[#e0a020]">Pro-Handicap Wizard 4.3 © 2017-2024</td>
        <td colSpan={2} className="bg-[#595959] p-0" />
        <td className="bg-[#595959] p-0"><span className="mr-[5px] block"><Status kind="o" /></span></td>
        <td colSpan={32} className="bg-[#595959] p-0" />
      </tr>
      {LOWER_ROWS.map((row) => (
        <tr key={row} className={rowHeight(row)}>
          <RowHeader row={row} />
          <td colSpan={3} className={clsx("p-0", row <= 29 ? "border-r border-black bg-[#bfbfbf]" : row === 30 ? "border-r border-b border-black bg-[#bfbfbf]" : "bg-[#595959]")} />
          <td colSpan={40} className="bg-[#595959] p-0" />
        </tr>
      ))}
    </tbody>
  </table>
);

const SheetButton: React.FC<{ className: string; children: ReactNode }> = ({ className, children }) => (
  <button className={clsx("flex items-center justify-center border border-white border-r-[#888] border-b-[#888] bg-[#f0f0f0] text-center text-[7px] leading-[10px]", className)}>
    {children}
  </button>
);

const SigmaArrow: React.FC<{ down?: boolean }> = ({ down }) => (
  <svg viewBox="0 0 12 8" className="h-[8px] w-[12px]">
    <path d={down ? "M2.2 0.5h1.6v3.5H6L3 7.5 0 4h2.2z" : "M2.2 7.5h1.6V4H6L3 0.5 0 4h2.2z"} fill="#111" />
    <path d="M11 2H7.5l2 2-2 2H11" fill="none" stroke="#222" strokeWidth="0.8" />
  </svg>
);

const MacroButtons = () => (
  <div className="absolute top-[75px] left-[14px] flex w-[71px] flex-col items-center">
    <div className="flex gap-[4px]">
      <SheetButton className="h-[12px] w-[19px]"><SigmaArrow /></SheetButton>
      <SheetButton className="h-[12px] w-[19px]"><SigmaArrow down /></SheetButton>
    </div>
    <SheetButton className="mt-[4px] h-[14px] w-[47px] text-[#2020f0]">Update</SheetButton>
    <SheetButton className="mt-[5px] h-[9px] w-[64px] text-[#f01010]">
      <span className="font-['Lato',sans-serif] text-[5px] font-bold whitespace-nowrap">SET PP FOLDER PATH</span>
    </SheetButton>
    <SheetButton className="mt-[90px] h-[25px] w-[43px] text-[#983c10]">Calculate</SheetButton>
    <SheetButton className="mt-[3px] h-[27px] w-[43px] font-semibold text-[#f01010]">Export<br />Data</SheetButton>
    <SheetButton className="mt-[3px] h-[26px] w-[43px] text-[#333]">User<br />Settings</SheetButton>
    <SheetButton className="mt-[16px] mr-[6px] h-[14px] w-[35px] text-[#333]">Reset</SheetButton>
  </div>
);

/* ---------- charts ---------- */

type Bar = [label: string, value: number];

const WIN_BARS: Bar[] = [
  ["YEMREHANAKRISTOS (5-2)", 28.3],
  ["RUIZ JUNIOR (5-2)", 26.08],
  ["WINNING FORTUNE (6-1)", 15.41],
  ["DIMANCHE GRAS (6-1)", 13.79],
  ["VOLATILE STORM (9-1)", 10.21],
  ["HE'S A DAREDEVIL (17-1)", 5.59],
  ["SIGNAL CALLER (160-1)", 0.62],
  ["NEIGH SAYER ()", 0],
];

const CALL_BARS: Bar[] = [
  ["(E) RUIZ JUNIOR", 44],
  ["(NA) WINNING FORTUNE", 27.8],
  ["(E) HE'S A DAREDEVIL", 25.4],
  ["(E) YEMREHANAKRISTOS", 2.7],
  ["(P) VOLATILE STORM", 0],
  ["(NA) NEIGH SAYER", 0],
  ["(E) SIGNAL CALLER", 0],
  ["(NA) DIMANCHE GRAS", 0],
];

type BarChartProps = {
  title: string;
  bars: Bar[];
  ticks: number[];
  width: number;
  left: number;
  plotWidth: number;
  band: number;
  barFill: string;
  edge: string;
  className: string;
};

const BarChart: React.FC<BarChartProps> = ({ title, bars, ticks, width, left, plotWidth, band, barFill, edge, className }) => {
  const max = ticks[ticks.length - 1];
  const bottom = 36 + band * bars.length;
  const x = (value: number) => left + (value / max) * plotWidth;
  return (
    <svg width={width} height="209" className={className}>
      <rect x="0.5" y="0.5" width={width - 1} height="208" fill="none" stroke="#000" />
      <text x={width / 2} y="16" textAnchor="middle" className="text-[11px] font-bold">{title}</text>
      <rect x={left} y="36" width={plotWidth} height={bottom - 36} fill="#fff" />
      {ticks.map((tick) => (
        <g key={tick}>
          <path d={`M${x(tick)} 36V${bottom}`} stroke="#a8a8a8" />
          <text x={x(tick)} y="30" textAnchor="middle" className="text-[6px]">{tick}%</text>
        </g>
      ))}
      <path d={`M${left} 36.5H${left + plotWidth}`} stroke="#a8a8a8" />
      {bars.map(([label, value], i) => (
        <g key={label}>
          <path d={`M${left - 3} ${36 + band * i}h3`} stroke="#888" />
          <text x={left - 5} y={48 + band * i} textAnchor="end" className="text-[5px] font-bold">{label}</text>
          {value > 0 && (
            <rect x={left} y={46.5 + band * i} width={x(value) - left} height="6" fill={barFill} stroke={edge} strokeWidth="0.6" />
          )}
        </g>
      ))}
    </svg>
  );
};

const POINTS: [string, number, number][] = [
  ["1", 0, 0],
  ["2", 7.51, 5.59],
  ["3", 10.17, 10.21],
  ["4", 9.18, 26.08],
  ["5", 11.29, 28.3],
  ["6", 8.15, 15.41],
  ["7", 3.11, 0.62],
  ["8", 5.47, 13.79],
];

const RadarMap = () => {
  const px = (v: number) => 21 + (v / 12) * 223;
  const py = (v: number) => 193 - (v / 30) * 165;
  return (
    <svg width="258" height="209" className="shrink-0">
      <defs>
        <linearGradient id="radar" x1="0" y1="0" x2="0" y2="1">
          <stop offset="0" stopColor="#b7dee8" />
          <stop offset="0.7" stopColor="#dbe6f4" />
          <stop offset="1" stopColor="#e0e6f2" />
        </linearGradient>
      </defs>
      <rect x="0.5" y="0.5" width="257" height="208" fill="url(#radar)" stroke="#000" />
      <rect x="21" y="28" width="223" height="165" fill="#fff" fillOpacity="0.85" />
      <text x="129" y="16" textAnchor="middle" className="text-[11px] font-bold">Radar Map (TOP vs. CV)</text>
      {[0, 2, 4, 6, 8, 10, 12].map((t) => (
        <g key={t}>
          <path d={`M${px(t)} 28V193`} stroke="#a0a4a8" />
          <text x={px(t)} y="204" textAnchor="middle" className="text-[6px]">{t}%</text>
        </g>
      ))}
      {[0, 5, 10, 15, 20, 25, 30].map((t) => (
        <g key={t}>
          <path d={`M21 ${py(t)}H244`} stroke="#a0a4a8" />
          <text x="15" y={py(t) + 2} textAnchor="end" className="text-[6px]">{t}%</text>
        </g>
      ))}
      {POINTS.map(([name, cv, top]) => (
        <g key={name}>
          <rect x={px(cv) - 2} y={py(top) - 2} width="4" height="4" fill="#c0504d" />
          <text x={px(cv) + (name === "7" || name === "3" ? 4 : 7)} y={py(top) + 3} className="text-[7px]">{name}</text>
        </g>
      ))}
    </svg>
  );
};

const Charts = () => (
  <div className="absolute top-[250px] left-[124px] flex font-['Lato','Liberation_Sans',sans-serif]">
    <BarChart
      title="Total Win Probability" bars={WIN_BARS} ticks={[0, 5, 10, 15, 20, 25, 30]}
      width={272} left={76} plotWidth={183} band={20.7} barFill="#c00000" edge="#f09090" className="shrink-0 bg-[#d9d9d9]"
    />
    <BarChart
      title="Probability to First Call" bars={CALL_BARS} ticks={[0, 10, 20, 30, 40, 50]}
      width={268} left={75} plotWidth={152} band={19.8} barFill="#0070c0" edge="#70b8e8" className="shrink-0 bg-[#c6d3ef]"
    />
    <RadarMap />
  </div>
);

const Sheet = () => (
  <main className="flex min-h-0 flex-1 overflow-hidden bg-[#595959]">
    <div className="relative min-w-0 flex-1 overflow-hidden">
      <Grid />
      <MacroButtons />
      <label className="absolute top-[230px] left-[230px] flex h-[9px] w-[72px] items-center gap-[3px] bg-[#ffff00] pl-[2px] font-['Lato',sans-serif] text-[6px] whitespace-nowrap">
        <TinyCheck label="Save Scratch Data" checked /> Save Scratch Data
      </label>
      <Charts />
      {/* hand-drawn highlights over the top pick */}
      <svg width="700" height="320" className="pointer-events-none absolute top-0 left-0" fill="none" stroke="#f0e840">
        <path d="M228 73.5H597V81.5H222.5V74.5H228" />
        <path d="M123 294C128 289 150 289.5 180 289.5H360C374 289.5 378 291 377 300C376 309 366 309 350 309.5H160C130 308 124 308 123 304Z" />
      </svg>
    </div>
    <div className="flex w-[13px] flex-col items-center bg-[#d8d8d8]">
      <button aria-label="Scroll up" className="mt-[2px] size-[9px] border border-[#c0c0c0] bg-white text-[5px] leading-none text-[#666]">▲</button>
      <div className="h-[72px] w-[9px] border border-[#c0c0c0] bg-white" />
      <button aria-label="Scroll down" className="mt-auto size-[9px] border border-[#c0c0c0] bg-white text-[5px] leading-none text-[#666]">▼</button>
    </div>
  </main>
);

/* ---------- bottom bars ---------- */

const TABS: Cell[] = [
  ["MAIN", "w-[35px] border-b border-[#217346] bg-linear-to-b from-white to-[#b8d8f0] font-bold text-[#217346]"],
  ["Combined", "w-[50px] bg-black text-white"],
  ["Winning Percentage", "w-[90px] text-[#555]"],
  ["Live", "w-[26px] bg-[#00b050] text-[#103018]"],
  ["ROI", "w-[28px] text-[#555]"],
  ["PrintPage", "w-[48px] bg-[#8064a2] text-white"],
  ["UserSettings", "w-[59px] bg-[#ffff00] text-[#222]"],
  ["Registration", "w-[58px] bg-[#ffc000] text-[#333]"],
];

const SheetTabs = () => (
  <div className="flex h-[19px] items-center border-t border-[#b0b0b0] bg-[#e6e6e6] text-[8px]">
    <div className="flex w-[62px] gap-[14px] pl-[16px] text-[6px] text-[#b0b0b0]"><span>◂</span><span>▸</span></div>
    <div className="flex gap-[2px]">
      {TABS.map(([name, tone]) => (
        <button key={name} className={clsx("h-[13px] leading-none whitespace-nowrap", tone)}>{name}</button>
      ))}
    </div>
    <button aria-label="New sheet" className="ml-[22px] flex size-[9px] items-center justify-center rounded-full border border-[#b8b8b8] text-[7px] leading-none text-[#999]">+</button>
    <div className="mr-[13px] ml-auto flex items-center">
      <span className="mr-[7px] text-[#999]">⋮</span>
      <button aria-label="Scroll left" className="size-[10px] border border-[#c0c0c0] bg-white text-[5px] leading-none">◀</button>
      <div className="h-[10px] w-[26px] border border-[#b0b0b0] bg-white" />
      <div className="h-[10px] w-[50px] bg-[#d8d8d8]" />
      <button aria-label="Scroll right" className="size-[10px] border border-[#c0c0c0] bg-white text-[5px] leading-none">▶</button>
    </div>
  </div>
);

const StatusBar = () => (
  <footer className="flex h-[13px] items-center bg-[#f3f2f1] pl-[5px] text-[7px] text-[#555]">
    <svg viewBox="0 0 9 8" className="h-[8px] w-[9px]" fill="none" stroke="#666" strokeWidth="0.9">
      <path d="M0.5 0.8h8v6.4h-8zM0.5 2.4h8M2.5 2.4v4.8" />
      <circle cx="5.4" cy="4.8" r="1.5" />
    </svg>
    <div className="ml-auto flex items-center">
      <span className="flex h-[13px] w-[20px] items-center justify-center bg-[#c8c8c8]"><Lines d="M0.5 0.5h9v9h-9zM3.5 0.5v9M6.5 0.5v9M0.5 3.5h9M0.5 6.5h9" /></span>
      <span className="ml-[9px]"><Lines d="M0.5 0.5h9v9h-9zM2.5 2.5h5v5h-5zM4 4h2M4 6h2" /></span>
      <span className="ml-[14px]"><Lines d="M0.5 0.5h9v9h-9zM3.5 0.5v5h3v-5M0.5 8h2" /></span>
      <span className="ml-[11px]">−</span>
      <input aria-label="Zoom" type="range" defaultValue={50} className="mx-[4px] h-[7px] w-[60px] appearance-none bg-[linear-gradient(#999,#999)] bg-size-[100%_1px] bg-center bg-no-repeat [&::-webkit-slider-thumb]:h-[7px] [&::-webkit-slider-thumb]:w-[3px] [&::-webkit-slider-thumb]:appearance-none [&::-webkit-slider-thumb]:bg-[#555]" />
      <span>+</span>
      <span className="mr-[4px] ml-[8px]">80%</span>
    </div>
  </footer>
);

const Office: React.FC<{ letter: string; main: string; dark: string; round?: boolean }> = ({ letter, main, dark, round }) => (
  <svg viewBox="0 0 20 20" className="size-[20px]">
    {round ? <circle cx="11.5" cy="10" r="8" fill={main} /> : <rect x="5" y="2" width="14" height="16" rx="1" fill={main} />}
    <path d={round ? "M11.5 2a8 8 0 0 1 8 8h-8z" : "M12 2h7v8h-7z"} fill="#fff" fillOpacity="0.25" />
    <rect x="1" y="5" width="10" height="10" rx="1" fill={dark} />
    <text x="6" y="13" textAnchor="middle" fill="#fff" className="text-[8px] font-bold">{letter}</text>
  </svg>
);

const ChromeIcon = ({ profile }: { profile?: boolean }) => (
  <svg viewBox="0 0 20 20" className="size-[20px]">
    <path d="M10 10 1.8 5.3A9.5 9.5 0 0 1 18.2 5.3z" fill="#e33b2e" />
    <path d="M10 10 18.2 5.3A9.5 9.5 0 0 1 10 19.5z" fill="#fcc31e" />
    <path d="M10 10v9.5A9.5 9.5 0 0 1 1.8 5.3z" fill="#2ba24c" />
    <path d="M10 5.5h8.3L10 10z" fill="#e33b2e" />
    <circle cx="10" cy="10" r="4.6" fill="#fff" />
    <circle cx="10" cy="10" r="3.6" fill="#3a7de8" />
    {profile && <><circle cx="15" cy="15" r="4.5" fill="#5a3018" /><circle cx="15" cy="14" r="1.8" fill="#d8a070" /></>}
  </svg>
);

const APPS: { name: string; open?: boolean; icon: ReactNode }[] = [
  {
    name: "Internet Explorer",
    icon: (
      <svg viewBox="0 0 20 20" className="size-[20px]" fill="none">
        <path d="M5 10.5h10.5A5.5 5.5 0 1 0 14.5 14" stroke="#3cb0f0" strokeWidth="3" />
        <path d="M2 17C0 13 8 4 18 2.5c1.5 1 0 3-1 4" stroke="#f8c830" strokeWidth="1.3" />
      </svg>
    ),
  },
  {
    name: "Tor Browser",
    icon: (
      <svg viewBox="0 0 20 20" className="size-[20px]" fill="none">
        <circle cx="10" cy="10" r="9" fill="#7d2fc8" />
        <path d="M10 3a7 7 0 0 1 0 14M10 6a4 4 0 0 1 0 8M10 8.5a1.5 1.5 0 0 1 0 3" stroke="#c898f4" strokeWidth="1.1" />
      </svg>
    ),
  },
  { name: "PowerPoint", icon: <Office letter="P" main="#e8603c" dark="#c03a1c" round /> },
  {
    name: "Vivaldi",
    icon: (
      <svg viewBox="0 0 20 20" className="size-[20px]" fill="none">
        <rect x="0.5" y="0.5" width="19" height="19" rx="8" fill="#ef3939" />
        <path d="m5.5 6.5 4.5 8 4-7" stroke="#fff" strokeWidth="3" strokeLinecap="round" strokeLinejoin="round" />
      </svg>
    ),
  },
  { name: "OneNote", icon: <Office letter="N" main="#b050d8" dark="#7020a0" /> },
  {
    name: "Explorer",
    open: true,
    icon: (
      <svg viewBox="0 0 20 20" className="size-[20px]">
        <path d="M2 4h6l1.5-2H18v16H2z" fill="#f0d070" />
        <path d="M4 6h12v6H4z" fill="#fff8d8" />
        <path d="M2 10h16v8H2z" fill="#f8e090" />
        <path d="M5 18v-5h10v5h-2.5v-2.5h-5V18z" fill="#70b8e0" />
      </svg>
    ),
  },
  {
    name: "Media Player",
    icon: (
      <svg viewBox="0 0 20 20" className="size-[20px]">
        <rect x="2" y="3" width="10" height="13" rx="1" fill="#58a8e0" />
        <rect x="6" y="5" width="12" height="13" rx="1" fill="#c8e4f4" />
        <circle cx="11" cy="10" r="6" fill="#f08020" stroke="#fff" />
        <path d="m9 7 5 3-5 3z" fill="#fff" />
      </svg>
    ),
  },
  { name: "Outlook", icon: <Office letter="O" main="#38a0e8" dark="#1060b0" /> },
  { name: "Excel", open: true, icon: <Office letter="X" main="#28a868" dark="#0c7040" /> },
  {
    name: "Firefox",
    icon: (
      <svg viewBox="0 0 20 20" className="size-[20px]">
        <path d="M10 1.5c2 1 3 2.5 3.5 4 1.5-.5 1-2 1-2 3 2 4.5 5 4 8.5a8.5 8.5 0 0 1-17-1c0-3 1-5 2-6.5 0 1 .5 1.5 1.5 2C7 6 8 4 10 1.5z" fill="#ff7a20" />
        <circle cx="10" cy="11.5" r="4.5" fill="#7040d0" />
        <path d="M3 9c2-3 6-2 8 0-3 0-4 1-4 3-2 0-4-1-4-3z" fill="#ffc830" />
      </svg>
    ),
  },
  { name: "Word", open: true, icon: <Office letter="W" main="#3c8ce0" dark="#1850a8" /> },
  { name: "Chrome", icon: <ChromeIcon /> },
  { name: "Chrome profile", open: true, icon: <ChromeIcon profile /> },
  {
    name: "Bitcoin Wallet",
    open: true,
    icon: (
      <svg viewBox="0 0 20 20" className="size-[20px]">
        <path d="M10 0.5c6 1 9 5 9 10a9 9 0 0 1-18 0c0-5 3-9 9-10z" fill="#80b818" />
        <rect x="5" y="5.5" width="10" height="10" rx="3" fill="#fff" />
        <text x="10" y="13.5" textAnchor="middle" fill="#80b818" className="text-[8px] font-bold">B</text>
      </svg>
    ),
  },
  {
    name: "Photos",
    open: true,
    icon: (
      <svg viewBox="0 0 20 20" className="size-[20px]">
        <path d="M1 2h18v16H1z" fill="#e8f4fc" />
        <path d="M3 4h14v12H3z" fill="#50a8e0" />
        <path d="M3 12c4-3 7 1 14-2v6H3z" fill="#184870" />
      </svg>
    ),
  },
];

const Taskbar = () => (
  <div className="relative flex h-[24px] items-center overflow-hidden bg-[#3c4043]">
    {/* blurred wallpaper seen through the glass */}
    <svg className="absolute inset-0 size-full" aria-hidden="true">
      <filter id="glass" x="0" y="0" width="100%" height="100%" colorInterpolationFilters="sRGB">
        <feTurbulence type="fractalNoise" baseFrequency="0.035 0.06" numOctaves="3" seed="7" />
        <feColorMatrix values="1 0 0 0 -0.23  1 0 0 0 -0.22  1 0 0 0 -0.21  0 0 0 0 1" />
      </filter>
      <rect width="100%" height="100%" filter="url(#glass)" />
    </svg>
    <button aria-label="Start" className="relative ml-[4px] flex w-[31px] shrink-0">
      <svg viewBox="0 0 24 24" className="size-[24px]">
        <circle cx="12" cy="12" r="11" fill="#2b5f8c" stroke="#9cc4dc" strokeWidth="0.8" />
        <path d="M5.5 7.5c2-1 4-1 6 0l-1 4.5c-2-1-3.5-1-5.5 0z" fill="#f06830" />
        <path d="M12.5 7.8c2 1 4 1 6 0l-1 4.5c-2 1-4 1-6 0z" fill="#8cc83c" />
        <path d="M4.8 13c2-1 3.7-1 5.6 0l-1 4.5c-2-1-3.6-1-5.4 0z" fill="#48a8e8" />
        <path d="M11.3 13.3c2 1 4 1 6 0l-1 4.5c-2 1-4 1-6 0z" fill="#fcd03c" />
      </svg>
    </button>
    <div className="relative flex gap-[2px]">
      {APPS.map(({ name, open, icon }) => (
        <button
          key={name}
          aria-label={name}
          className={clsx("flex h-[24px] w-[36px] items-center justify-center rounded-xs border", open ? "border-white/50 bg-white/25" : "border-transparent")}
        >
          {icon}
        </button>
      ))}
    </div>
    <div className="relative ml-auto flex items-center gap-[8px] pr-[14px] text-[7px] leading-[10px] text-white">
      <span className="text-[5px]">▲</span>
      <svg viewBox="0 0 10 10" className="size-[10px]">
        <path d="M1 0.5v9M1.5 1h6v4h-6z" fill="#fff" stroke="#fff" />
        <circle cx="7" cy="7" r="3" fill="#e02020" />
        <path d="m5.8 5.8 2.4 2.4M8.2 5.8 5.8 8.2" stroke="#fff" strokeWidth="0.9" />
      </svg>
      <div className="text-center">7:01 AM<br />2/24/2025</div>
    </div>
  </div>
);

const App = () => (
  <div className="flex h-screen w-full flex-col overflow-hidden font-['Open_Sans','Noto_Sans',sans-serif]">
    <TitleBar />
    <MenuBar />
    <Ribbon />
    <FormulaBar />
    <Sheet />
    <SheetTabs />
    <StatusBar />
    <Taskbar />
  </div>
);

export default App;
